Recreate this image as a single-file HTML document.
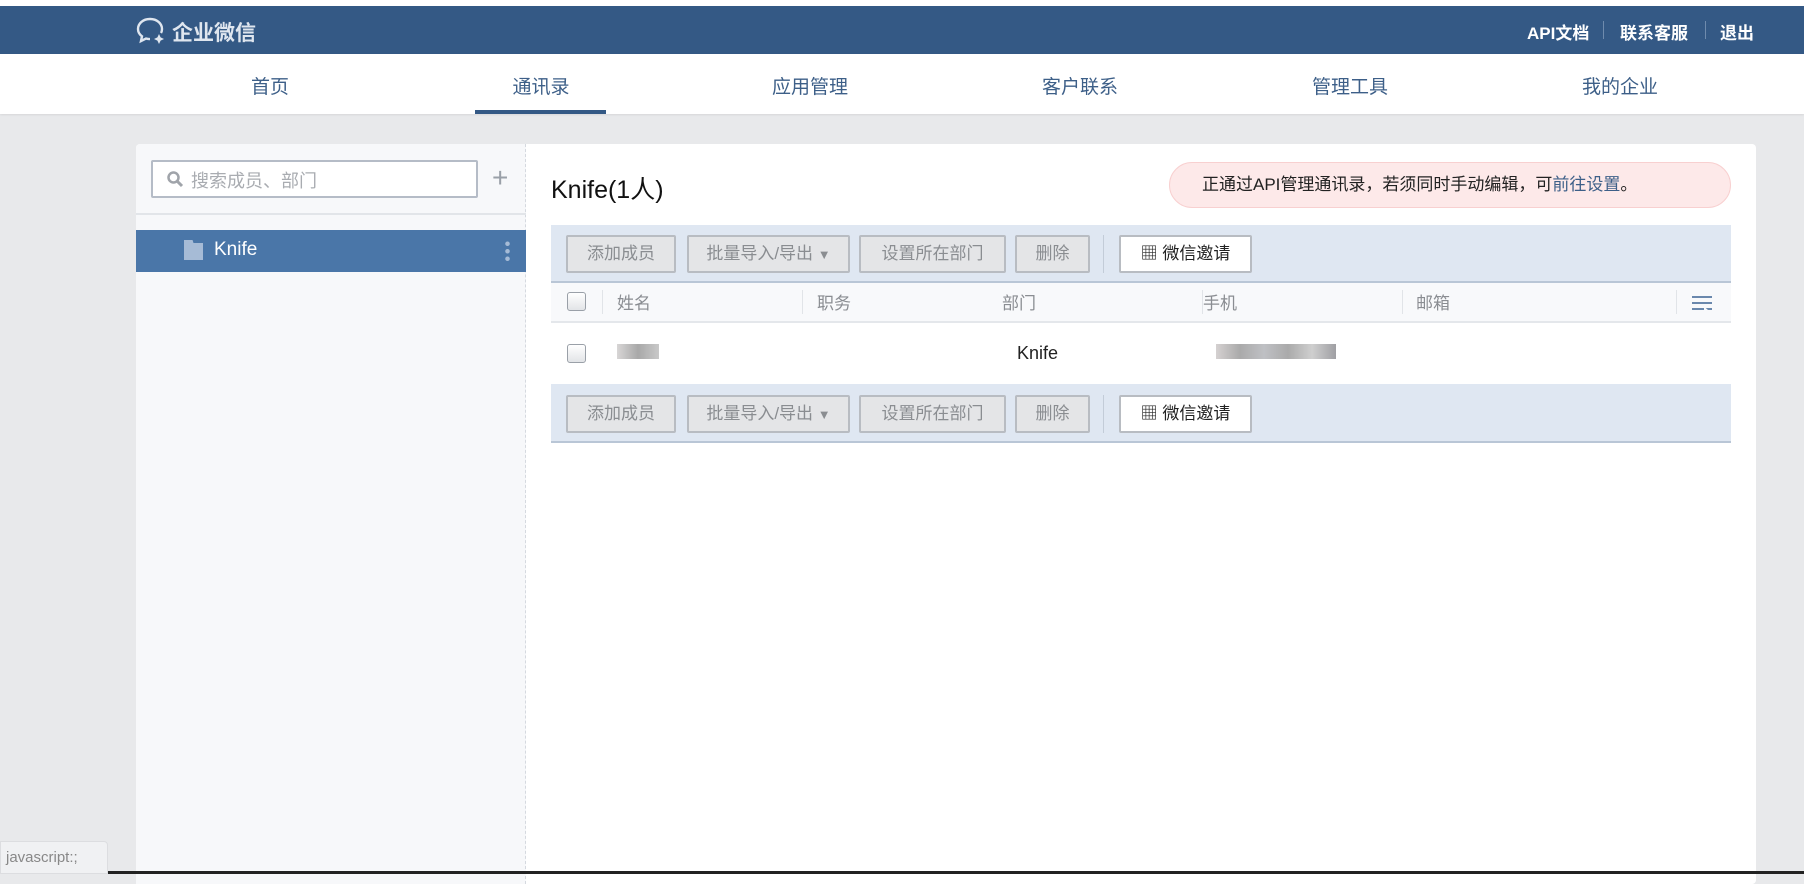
<!DOCTYPE html>
<html><head><meta charset="utf-8"><style>
*{margin:0;padding:0;box-sizing:border-box}
body{width:1804px;height:874px;overflow:hidden;background:#e8e9eb;font-family:"Liberation Sans","Noto Sans CJK SC",sans-serif;position:relative}
.a{position:absolute}
.top{left:0;top:6px;width:1804px;height:48px;background:#345985}
.nav{left:0;top:54px;width:1804px;height:60px;background:#fff;box-shadow:0 1px 2px rgba(0,0,0,.08)}
.nav span{position:absolute;top:18px;font-size:19px;color:#3d5f88;transform:translateX(-50%)}
.panel{left:136px;top:144px;width:1620px;height:740px;background:#fff;border-radius:4px}
.side{left:136px;top:144px;width:390px;height:740px;background:#f7f8fa;border-right:1px dashed #d5d9df;border-radius:4px 0 0 0}
.btn{position:absolute;height:38px;border:2px solid #b8bcc2;border-radius:2px;background:#e4e5e7;color:#8a8d91;font-size:17px;line-height:34px;text-align:center}
.tb{background:#dfe7f2;border-bottom:2px solid #b9c6d6}
.hd{color:#8a8d92;font-size:17px}
.cb{width:19px;height:19px;border:1px solid #9aa0a8;border-radius:3px;background:linear-gradient(#fff,#e2e4e7)}
.dv{width:1px;height:24px;background:#e1e4e8}
.tl{position:absolute;top:19px;font-size:17px;color:#fff;font-weight:bold}
.sp{position:absolute;top:21px;width:1px;height:18px;background:#6f8bad}
</style></head><body>
<div class="a" style="left:0;top:0;width:1804px;height:6px;background:#fff"></div>
<div class="a top"></div>
<svg class="a" style="left:136px;top:15px" width="32" height="32" viewBox="0 0 32 32"><path d="M14 4C7 4 2 8.5 2 14c0 3 1.5 5.5 4 7.3L5 26l5-2.5c1.3.4 2.6.6 4 .6" fill="none" stroke="#dfe6ef" stroke-width="2.4"/><path d="M14 4c7 0 12 4.5 12 10 0 1.5-.4 3-1 4" fill="none" stroke="#dfe6ef" stroke-width="2.4"/><path d="M23 19l1.6 3.4L28 24l-3.4 1.6L23 29l-1.6-3.4L18 24l3.4-1.6z" fill="#dfe6ef"/></svg>
<div class="a" style="left:172px;top:17px;font-size:21px;color:#dfe6ef;font-weight:bold">企业微信</div>
<div class="tl" style="left:1527px">API文档</div>
<div class="sp" style="left:1603px"></div>
<div class="tl" style="left:1620px">联系客服</div>
<div class="sp" style="left:1705px"></div>
<div class="tl" style="left:1720px">退出</div>
<div class="a nav">
<span style="left:270px">首页</span><span style="left:541px">通讯录</span><span style="left:810px">应用管理</span><span style="left:1080px">客户联系</span><span style="left:1350px">管理工具</span><span style="left:1620px">我的企业</span>
<div class="a" style="left:475px;top:56px;width:131px;height:4px;background:#345985"></div>
</div>
<div class="a panel"></div>
<div class="a side"></div>
<div class="a" style="left:151px;top:160px;width:327px;height:38px;border:2px solid #b5bcc7;border-radius:2px;background:#fff"></div>
<svg class="a" style="left:166px;top:170px" width="18" height="18" viewBox="0 0 18 18"><circle cx="7.5" cy="7.5" r="5" fill="none" stroke="#a0a4aa" stroke-width="2.5"/><path d="M11 11l5 5" stroke="#a0a4aa" stroke-width="3"/></svg>
<div class="a" style="left:191px;top:167px;font-size:18px;color:#a9acb1">搜索成员、部门</div>
<div class="a" style="left:492px;top:164px;font-size:28px;color:#9aa0a8;line-height:28px">+</div>
<div class="a" style="left:136px;top:213px;width:390px;height:2px;background:#e2e5e9"></div>
<div class="a" style="left:136px;top:230px;width:390px;height:42px;background:#4a76a8"></div>
<div class="a" style="left:184px;top:240px;width:19px;height:20px;background:#a6bbd6;clip-path:polygon(0 0,45% 0,50% 15%,100% 15%,100% 100%,0 100%)"></div>
<div class="a" style="left:214px;top:239px;font-size:19px;color:#fff">Knife</div>
<div class="a" style="left:505px;top:240px;width:5px;height:22px;background:radial-gradient(circle,#a6bbd6 2px,transparent 2.5px) 0 0/5px 7.5px"></div>
<div class="a" style="left:551px;top:170px;font-size:25px;color:#111">Knife(1人)</div>
<div class="a" style="left:1169px;top:162px;width:562px;height:46px;background:#fde9e9;border:1px solid #f8d0d0;border-radius:23px;font-size:17px;color:#222;line-height:44px;padding-left:32px">正通过API管理通讯录，若须同时手动编辑，可<span style="color:#3d5f88">前往设置</span>。</div>
<div class="a tb" style="left:551px;top:225px;width:1180px;height:58px"></div>
<div class="a tb" style="left:551px;top:384px;width:1180px;height:59px"></div>
<div class="a" style="left:551px;top:283px;width:1180px;height:40px;background:#f8f9fb;border-bottom:2px solid #e4e7eb"></div>
<div class="a cb" style="left:567px;top:292px"></div>
<div class="a dv" style="left:602px;top:290px"></div><div class="a dv" style="left:802px;top:290px"></div><div class="a dv" style="left:1202px;top:290px"></div><div class="a dv" style="left:1402px;top:290px"></div><div class="a dv" style="left:1676px;top:290px"></div>
<div class="a hd" style="left:617px;top:289px">姓名</div><div class="a hd" style="left:817px;top:289px">职务</div><div class="a hd" style="left:1002px;top:289px">部门</div><div class="a hd" style="left:1203px;top:289px">手机</div><div class="a hd" style="left:1416px;top:289px">邮箱</div>
<div class="a" style="left:1692px;top:296px;width:20px;height:14px;background:repeating-linear-gradient(#6a88ad 0 2px,transparent 2px 6px);clip-path:polygon(0 0,60% 0,60% 100%,0 100%,0 0,80% 0,100% 0,100% 100%,80% 100%)"></div>
<div class="a cb" style="left:567px;top:344px"></div>
<div class="a" style="left:617px;top:344px;width:42px;height:15px;background:linear-gradient(90deg,#d8d6d6,#a8a8a8,#c9c9c9)"></div>
<div class="a" style="left:1017px;top:343px;font-size:18px;color:#222">Knife</div>
<div class="a" style="left:1216px;top:344px;width:120px;height:15px;background:linear-gradient(90deg,#d5d1d1,#aaa,#bfc0c4,#aaa,#cfcfcf,#9f9fa3)"></div>
<div class="btn" style="left:566px;top:235px;width:110px">添加成员</div>
<div class="btn" style="left:687px;top:235px;width:163px">批量导入/导出 <span style="font-size:13px">▼</span></div>
<div class="btn" style="left:859px;top:235px;width:147px">设置所在部门</div>
<div class="btn" style="left:1015px;top:235px;width:75px">删除</div>
<div class="a" style="left:1103px;top:235px;width:1px;height:38px;background:#c3ccd8"></div>
<div class="btn" style="left:1119px;top:235px;width:133px;background:#fff;color:#222">▦ 微信邀请</div>
<div class="btn" style="left:566px;top:395px;width:110px">添加成员</div>
<div class="btn" style="left:687px;top:395px;width:163px">批量导入/导出 <span style="font-size:13px">▼</span></div>
<div class="btn" style="left:859px;top:395px;width:147px">设置所在部门</div>
<div class="btn" style="left:1015px;top:395px;width:75px">删除</div>
<div class="a" style="left:1103px;top:395px;width:1px;height:38px;background:#c3ccd8"></div>
<div class="btn" style="left:1119px;top:395px;width:133px;background:#fff;color:#222">▦ 微信邀请</div>
<div class="a" style="left:0;top:841px;width:108px;height:33px;background:#f0f1f3;border:1px solid #dcdde0;border-radius:0 4px 0 0;font-size:15px;color:#888;padding:7px 0 0 5px">javascript:;</div>
<div class="a" style="left:108px;top:871px;width:1696px;height:3px;background:#222"></div>
</body></html>
